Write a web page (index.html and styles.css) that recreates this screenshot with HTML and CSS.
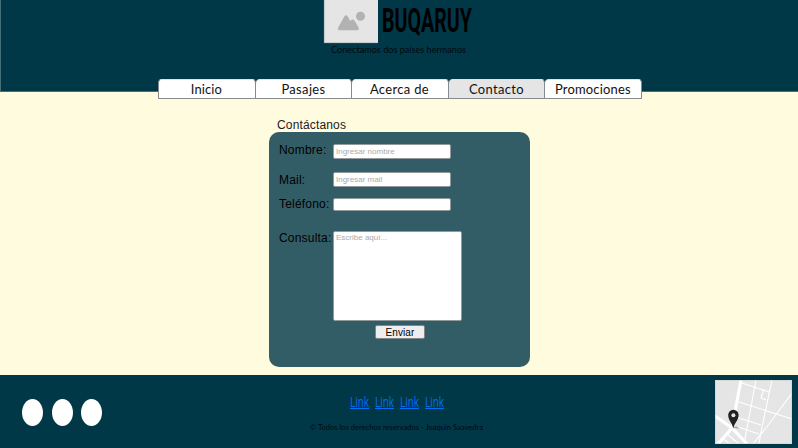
FILE: index.html
```html
<!DOCTYPE html>
<html lang="es">
<head>
<meta charset="utf-8">
<title>Buqaruy - Contacto</title>
<link rel="stylesheet" href="styles.css">
</head>
<body>
<header class="header">
  <div class="brand">
    <svg class="logo" viewBox="0 0 54 43"><rect width="54" height="43" fill="#e5e5e5"/><path d="M.3 0V42.7H54" fill="none" stroke="#9db2b4" stroke-width=".6"/><path d="M15.6 30.2Q13 30.2 14.4 27.2L20.2 16.5Q22 13.8 23.8 16.5L26.2 21Q28.8 18.2 30.8 21L34.6 27.5Q35.6 30.2 33 30.2Z" fill="#b2b2b2"/><circle cx="36.5" cy="16.3" r="4.5" fill="#b2b2b2"/></svg>
    <svg class="title" viewBox="0 0 100 43"><text x="1" y="32" textLength="90" lengthAdjust="spacingAndGlyphs">BUQARUY</text></svg>
  </div>
  <svg class="tagline" viewBox="0 0 140 14"><text x="2" y="10" textLength="135" lengthAdjust="spacingAndGlyphs">Conectamos dos países hermanos</text></svg>
  <nav class="tabs">
    <a class="tab"><svg viewBox="0 0 96 18"><text x="47.5" y="14.5" text-anchor="middle" textLength="31">Inicio</text></svg></a>
    <a class="tab"><svg viewBox="0 0 96 18"><text x="47.5" y="14.5" text-anchor="middle" textLength="44">Pasajes</text></svg></a>
    <a class="tab"><svg viewBox="0 0 96 18"><text x="47.5" y="14.5" text-anchor="middle" textLength="59">Acerca de</text></svg></a>
    <a class="tab active"><svg viewBox="0 0 96 18"><text x="47.5" y="14.5" text-anchor="middle" textLength="55">Contacto</text></svg></a>
    <a class="tab"><svg viewBox="0 0 96 18"><text x="48" y="14.5" text-anchor="middle" textLength="76">Promociones</text></svg></a>
  </nav>
</header>
<main class="main">
  <h1 class="heading">Contáctanos</h1>
  <form class="panel">
    <label for="nombre">Nombre:</label><input id="nombre" class="field" placeholder="Ingresar nombre">
    <label for="mail">Mail:</label><input id="mail" class="field" placeholder="Ingresar mail">
    <label for="tel">Teléfono:</label><input id="tel" class="field short">
    <label for="consulta">Consulta:</label><textarea id="consulta" class="area" placeholder="Escribe aquí..."></textarea>
    <button class="send" type="button">Enviar</button>
  </form>
</main>
<footer class="footer">
  <div class="social"><span></span><span></span><span></span></div>
  <div class="center">
    <div class="links">
      <a><svg viewBox="0 0 23 22"><text x="2" y="15" textLength="19" lengthAdjust="spacingAndGlyphs">Link</text><path d="M2 16.5H21"/></svg></a>
      <a><svg viewBox="0 0 23 22"><text x="2" y="15" textLength="19" lengthAdjust="spacingAndGlyphs">Link</text><path d="M2 16.5H21"/></svg></a>
      <a><svg viewBox="0 0 23 22"><text x="2" y="15" textLength="19" lengthAdjust="spacingAndGlyphs">Link</text><path d="M2 16.5H21"/></svg></a>
      <a><svg viewBox="0 0 23 22"><text x="2" y="15" textLength="19" lengthAdjust="spacingAndGlyphs">Link</text><path d="M2 16.5H21"/></svg></a>
    </div>
    <svg class="copy" viewBox="0 0 176 14"><text x="1" y="10" textLength="173" lengthAdjust="spacingAndGlyphs">© Todos los derechos reservados - Joaquin Saavedra</text></svg>
  </div>
  <svg class="map" viewBox="0 0 77 64">
    <rect width="77" height="64" fill="#e5e5e5"/>
    <g fill="none" stroke="#fff" stroke-width="1.1">
      <path d="M27 3L54 12M24 22L77 39M21 37L46 45M20 46L44 54M41 0L29 64M57 0L46 52L44 64M77 13L54 44L38 64M49 9L46 18L51 20M7 58L15 64M12 54L24 64"/>
      <path d="M26 0L17 48M0 36L17 48L32 64M17 48L3 64" stroke-width="3.2"/>
      <path d="M18 52L29 63" stroke="#e5e5e5" stroke-width=".7"/>
    </g>
    <path d="M18 48L25 48.5L21 46Z" fill="#aaa"/>
    <path d="M18.3 48.5C17 42.5 13.2 40 13.2 35A5.1 5.1 0 0 1 23.6 35C23.6 40 19.5 42.5 18.3 48.5Z" fill="#222"/>
    <circle cx="18.4" cy="35.2" r="2" fill="#e5e5e5"/>
    <path d="M.5 .5H76.5V63.5H.5Z" fill="none" stroke="#c9d0d0" stroke-width=".6"/>
  </svg>
</footer>
</body>
</html>
```
FILE: styles.css
```css
* { box-sizing: border-box; }
body {
  margin: 0;
  width: 798px;
  height: 448px;
  overflow: hidden;
  background: #fffbdf;
  color: #000;
  font-family: "Liberation Sans", sans-serif;
  font-size: 12px;
}
svg { display: block; overflow: visible; }
.header {
  height: 92px;
  background: #003848;
  border-left: 1px solid #467078;
  border-bottom: 1px solid #467078;
}
.brand { display: flex; gap: 3px; margin-left: 323px; }
.logo { width: 54px; height: 43px; }
.title { width: 100px; height: 43px; }
.title text { font: bold 32.5px Roboto, sans-serif; }
.tagline {
  width: 140px;
  height: 14px;
  margin-left: 328px;
  font: 9px Lato, sans-serif;
  fill: #00090d;
}
.tabs {
  display: flex;
  width: 484px;
  height: 20px;
  margin: 22px 0 0 157px;
  position: relative;
}
.tab {
  flex: 1 1 0;
  min-width: 0;
  background: #fff;
  border: 1px solid #858b8e;
  border-left-width: 0;
  border-top-color: #dfe3e4;
  border-radius: 4px 4px 0 0;
}
.tab:first-child { border-left-width: 1px; }
.tab.active { background: #e5e5e5; }
.tab svg { width: 100%; height: 18px; }
.tab text { font: 13px Lato, sans-serif; fill: #111; }
.main { height: 283px; padding: 25px 0 0 269px; }
.heading {
  height: 15px;
  margin: 0 0 0 8px;
  font-size: 12px;
  font-weight: 400;
  line-height: 16px;
  letter-spacing: .15px;
  color: #222;
}
.panel {
  display: grid;
  grid-template-columns: 54px 129px;
  grid-template-rows: 28px 26px 33px 94px 14px;
  align-items: start;
  width: 261px;
  height: 235px;
  padding: 12px 10px;
  background: #335d66;
  border-radius: 10px;
}
label { line-height: 14px; letter-spacing: .2px; white-space: nowrap; }
label[for="nombre"] { margin-top: -1px; }
label[for="mail"] { margin-top: 1px; }
label[for="tel"] { margin-top: -1px; }
.field, .area {
  margin: 0;
  padding: 0 2px;
  border: 1px solid #929a9c;
  border-radius: 2px;
  background: #fff;
  font: 8px "Liberation Sans", sans-serif;
  resize: none;
}
.field { width: 118px; height: 15px; }
.field.short { height: 13px; }
.area { width: 129px; height: 90px; padding-top: 1px; }
::placeholder { color: #aaa; opacity: 1; }
.send {
  grid-column: 2;
  width: 50px;
  height: 14px;
  margin-left: 42px;
  padding: 1px 0 0;
  border: 1px solid #858585;
  border-radius: 2px;
  background: #eee;
  font: 10px/11px "Liberation Sans", sans-serif;
  letter-spacing: .1px;
  color: #000;
}
.footer { display: flex; height: 73px; background: #003848; }
.social { display: flex; gap: 8.5px; width: 309px; padding: 24px 0 0 22px; }
.social span { width: 21px; height: 27px; border-radius: 50%; background: #fff; }
.center { width: 176px; padding-top: 17px; }
.links { display: flex; gap: 2px; margin-left: 39px; }
.links svg { width: 23px; height: 22px; }
.links text { font: 14px "Open Sans", sans-serif; fill: #0070f5; }
.links path { stroke: #0070f5; }
.copy { width: 176px; height: 14px; margin-top: 6px; font: 8px Lato, sans-serif; fill: #00090d; }
.map { width: 77px; height: 64px; margin: 5px 0 0 230px; overflow: hidden; }
```
